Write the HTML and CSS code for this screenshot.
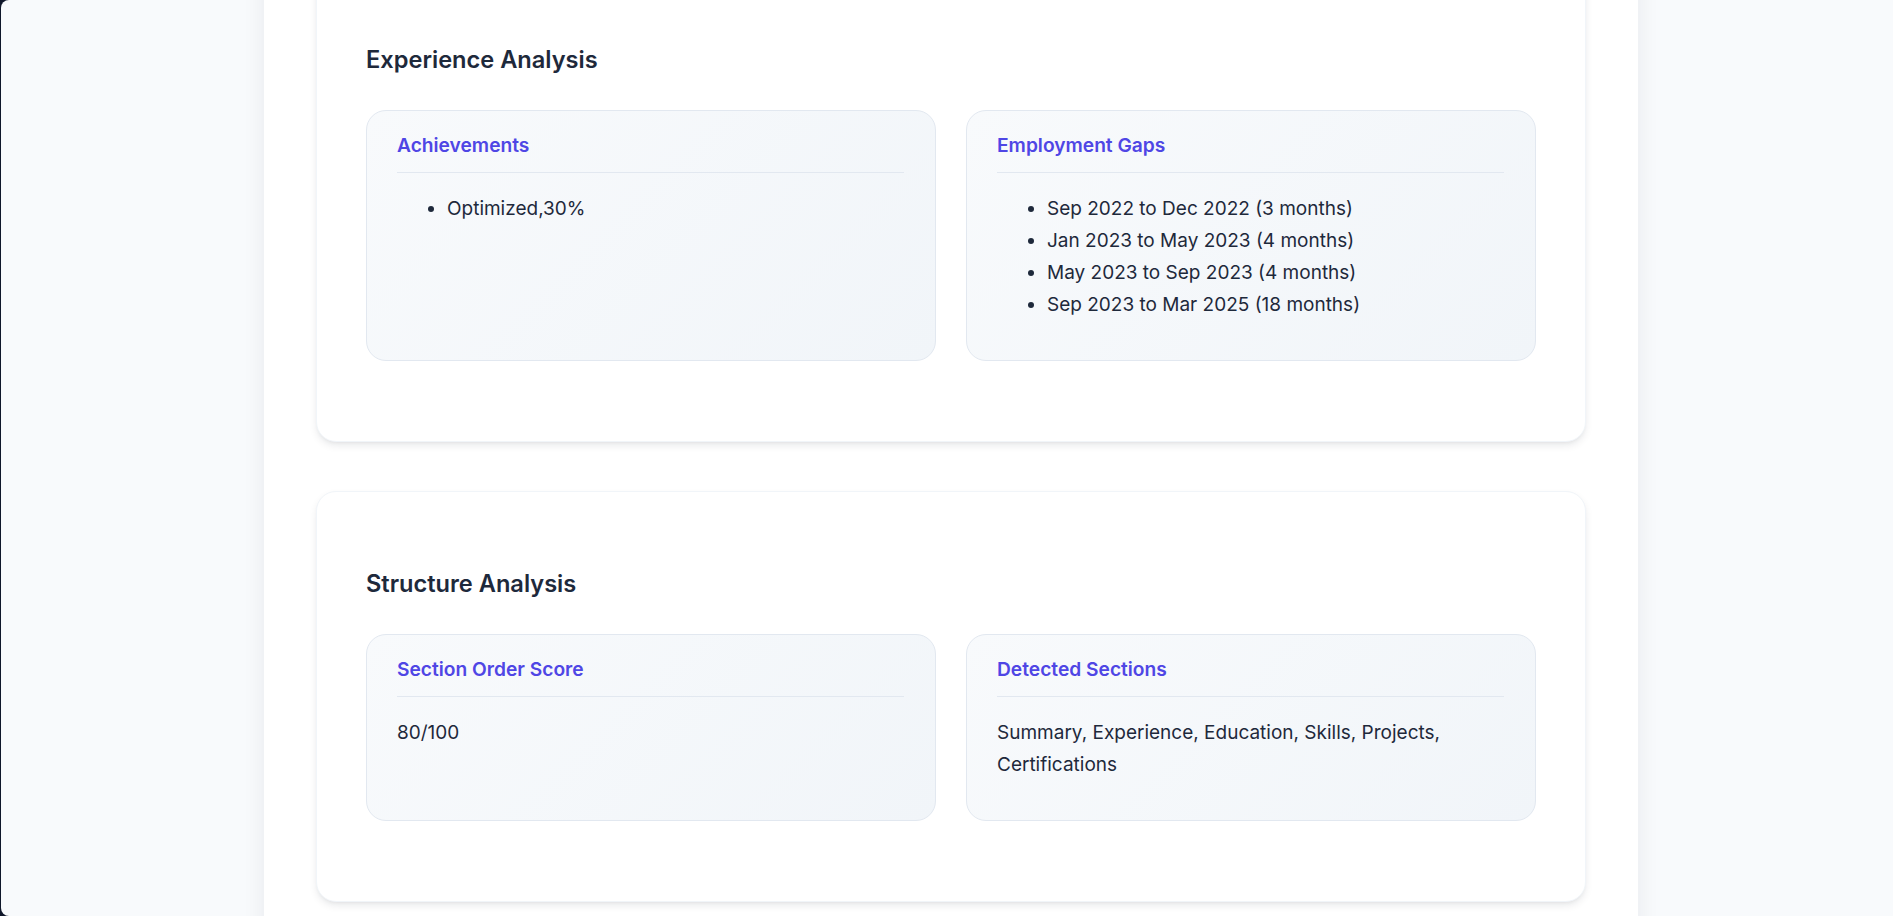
FILE: index.html
```html
<!DOCTYPE html>
<html lang="en">
<head>
<meta charset="utf-8">
<title>Resume Analysis</title>
<link rel="stylesheet" href="styles.css">
</head>
<body>
<div class="page">
  <main class="column">
    <section class="card">
      <h2 class="card-title">Experience Analysis</h2>
      <div class="grid">
        <div class="box">
          <h3 class="box-title">Achievements</h3>
          <ul class="box-list">
            <li>Optimized,30%</li>
          </ul>
        </div>
        <div class="box">
          <h3 class="box-title">Employment Gaps</h3>
          <ul class="box-list">
            <li>Sep 2022 to Dec 2022 (3 months)</li>
            <li>Jan 2023 to May 2023 (4 months)</li>
            <li>May 2023 to Sep 2023 (4 months)</li>
            <li>Sep 2023 to Mar 2025 (18 months)</li>
          </ul>
        </div>
      </div>
    </section>
    <section class="card">
      <h2 class="card-title">Structure Analysis</h2>
      <div class="grid">
        <div class="box">
          <h3 class="box-title">Section Order Score</h3>
          <p class="box-text">80/100</p>
        </div>
        <div class="box">
          <h3 class="box-title">Detected Sections</h3>
          <p class="box-text">Summary, Experience, Education, Skills, Projects, Certifications</p>
        </div>
      </div>
    </section>
  </main>
</div>
</body>
</html>
```

FILE: styles.css
```css
html {
  background: #0f172a;
  height: 100%;
}
body {
  margin: 0 0 0 1px;
  height: 100vh;
  overflow: hidden;
  background: #f8fafc;
  border-radius: 8px 0 0 8px;
  font-family: Inter, "Noto Sans", sans-serif;
  color: #1e293b;
}
.page {
  display: flex;
  justify-content: center;
  padding-left: 8px;
}
.column {
  width: 1374px;
  box-sizing: border-box;
  background: #ffffff;
  box-shadow: 0 0 22px rgba(15, 23, 42, 0.07);
  padding: 0 52px;
  margin-top: -33px;
  min-height: 1100px;
}
.card {
  background: #ffffff;
  border: 1px solid #f1f5f9;
  border-radius: 20px;
  box-shadow: 0 4px 10px -2px rgba(15, 23, 42, 0.12), 0 2px 4px -2px rgba(15, 23, 42, 0.06);
  padding: 76px 49px 80px;
  margin-bottom: 49px;
}
.card-title {
  margin: 0 0 34px;
  font-size: 23.6px;
  line-height: 32px;
  font-weight: 600;
  color: #1e293b;
}
.grid {
  display: grid;
  grid-template-columns: 1fr 1fr;
  gap: 30px;
}
.box {
  border: 1px solid #e2e8f0;
  border-radius: 20px;
  background: linear-gradient(135deg, #f8fafc 0%, #f1f5f9 100%);
  padding: 24px 31px 39px 30px;
}
.box-title {
  margin: 0 0 20px;
  padding-bottom: 17px;
  border-bottom: 1px solid #e2e8f0;
  font-size: 19.2px;
  line-height: 20px;
  font-weight: 600;
  color: #4f46e5;
}
.box-list {
  margin: 0;
  padding-left: 50px;
  font-size: 19px;
  line-height: 32px;
}
.box-text {
  margin: 0;
  font-size: 19px;
  line-height: 32px;
}
```
